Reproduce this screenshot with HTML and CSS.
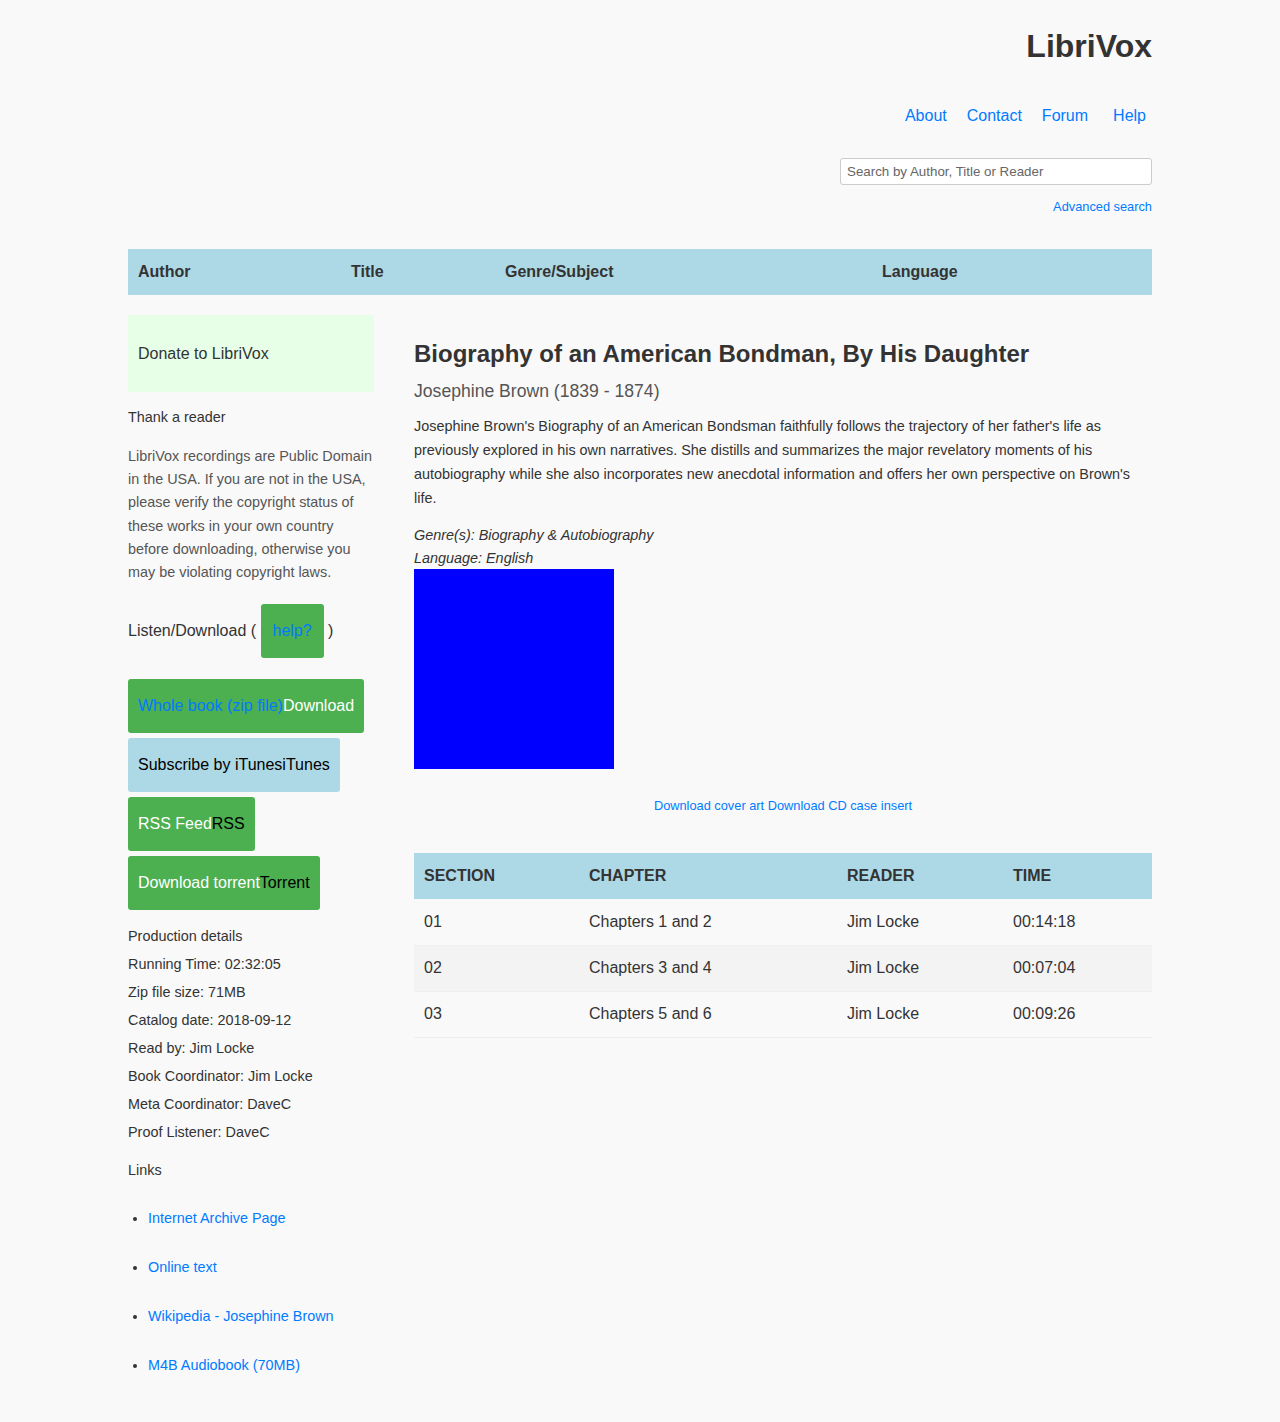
FILE: index.html
```html
<!DOCTYPE html>
<html lang="en">
<head>
<meta charset="utf-8">
<title>LibriVox</title>
<link rel="stylesheet" href="styles.css">
</head>
<body>
<div class="wrap">
  <header class="site-header">
    <h1 class="logo">LibriVox</h1>
    <nav class="top-nav">
      <a href="#" class="nav-about">About</a>
      <a href="#" class="nav-contact">Contact</a>
      <a href="#" class="nav-forum">Forum</a>
      <a href="#" class="nav-help">Help</a>
    </nav>
    <div class="search">
      <input type="text" class="search-input" placeholder="Search by Author, Title or Reader">
      <a href="#" class="adv-search">Advanced search</a>
    </div>
  </header>

  <div class="browse-bar">
    <span class="b-author">Author</span>
    <span class="b-title">Title</span>
    <span class="b-genre">Genre/Subject</span>
    <span class="b-lang">Language</span>
  </div>

  <div class="layout">
    <aside class="sidebar">
      <div class="donate">Donate to LibriVox</div>
      <p class="thank">Thank a reader</p>
      <p class="notice">LibriVox recordings are Public Domain in the USA. If you are not in the USA, please verify the copyright status of these works in your own country before downloading, otherwise you may be violating copyright laws.</p>
      <div class="listen">Listen/Download ( <a href="#" class="btn btn-green help-btn">help?</a> )</div>
      <div class="dl-buttons">
        <a href="#" class="btn btn-green"><span class="link">Whole book (zip file)</span><span class="white">Download</span></a>
        <a href="#" class="btn btn-blue"><span class="black">Subscribe by iTunesiTunes</span></a>
        <a href="#" class="btn btn-green"><span class="white">RSS Feed</span><span class="black">RSS</span></a>
        <a href="#" class="btn btn-green"><span class="white">Download torrent</span><span class="black">Torrent</span></a>
      </div>
      <div class="prod">
        <p>Production details</p>
        <p>Running Time: 02:32:05</p>
        <p>Zip file size: 71MB</p>
        <p>Catalog date: 2018-09-12</p>
        <p>Read by: Jim Locke</p>
        <p>Book Coordinator: Jim Locke</p>
        <p>Meta Coordinator: DaveC</p>
        <p>Proof Listener: DaveC</p>
      </div>
      <p class="links-h">Links</p>
      <ul class="links">
        <li><a href="#">Internet Archive Page</a></li>
        <li><a href="#">Online text</a></li>
        <li><a href="#">Wikipedia - Josephine Brown</a></li>
        <li><a href="#">M4B Audiobook (70MB)</a></li>
      </ul>
    </aside>

    <main class="content">
      <h2 class="book-title">Biography of an American Bondman, By His Daughter</h2>
      <p class="book-author">Josephine Brown (1839 - 1874)</p>
      <p class="desc">Josephine Brown's Biography of an American Bondsman faithfully follows the trajectory of her father's life as previously explored in his own narratives. She distills and summarizes the major revelatory moments of his autobiography while she also incorporates new anecdotal information and offers her own perspective on Brown's life.</p>
      <p class="meta">Genre(s): Biography &amp; Autobiography</p>
      <p class="meta">Language: English</p>
      <div class="cover"></div>
      <div class="cover-links"><a href="#">Download cover art</a> <a href="#">Download CD case insert</a></div>
      <table class="chapters">
        <thead>
          <tr><th class="c1">SECTION</th><th class="c2">CHAPTER</th><th class="c3">READER</th><th class="c4">TIME</th></tr>
        </thead>
        <tbody>
          <tr><td>01</td><td>Chapters 1 and 2</td><td>Jim Locke</td><td>00:14:18</td></tr>
          <tr><td>02</td><td>Chapters 3 and 4</td><td>Jim Locke</td><td>00:07:04</td></tr>
          <tr><td>03</td><td>Chapters 5 and 6</td><td>Jim Locke</td><td>00:09:26</td></tr>
        </tbody>
      </table>
    </main>
  </div>
</div>
</body>
</html>
```

FILE: styles.css
```css
* { box-sizing: border-box; }
html, body { margin: 0; padding: 0; }
body {
  background: #f9f9f9;
  font-family: "Liberation Sans", Arial, sans-serif;
  color: #333;
}
a { color: #007bff; text-decoration: none; }
p { margin: 0; }

.wrap { width: 1024px; margin: 0 auto; }

.site-header { display: flex; flex-direction: column; align-items: flex-end; }
.logo { margin: 28px 0 0 0; font-size: 32px; line-height: 36px; font-weight: bold; color: #333; }
.top-nav { display: flex; margin-top: 42px; padding-right: 6px; font-size: 16px; line-height: 20px; }
.top-nav a { margin-left: 20px; }
.top-nav .nav-help { margin-left: 25px; }
.search { display: flex; flex-direction: column; align-items: flex-end; margin-top: 32px; }
.search-input {
  width: 312px; height: 27px; padding: 2px 6px;
  border: 1px solid #ccc; border-radius: 3px; background: #fff;
  font-family: "Liberation Sans", Arial, sans-serif; font-size: 13.33px; color: #333;
}
.search-input::placeholder { color: #666; }
.adv-search { margin-top: 14px; font-size: 12.8px; line-height: 16px; }

.browse-bar {
  margin-top: 34px; height: 46px; background: #add8e6;
  display: flex; align-items: center; padding-left: 10px;
  font-weight: bold; font-size: 16px; color: #333;
}
.b-author { width: 213px; }
.b-title { width: 154px; }
.b-genre { width: 377px; }

.layout { display: flex; margin-top: 20px; gap: 40px; }
.sidebar { width: 246px; flex: none; font-size: 14.4px; color: #333; }
.donate { background: #e6ffe6; height: 77px; display: flex; align-items: center; padding-left: 10px; font-size: 16px; }
.thank { margin-top: 15px; line-height: 20px; }
.notice { margin-top: 18px; line-height: 23.2px; color: #555; }
.listen { margin-top: 20px; display: flex; align-items: center; font-size: 16px; white-space: pre; }
.btn { display: inline-block; padding: 18px 10px; font-size: 16px; line-height: 18px; border-radius: 3px; }
.btn-green { background: #4caf50; }
.btn-blue { background: #add8e6; }
.help-btn { padding: 18px 12px; color: #007bff; }
.dl-buttons { display: flex; flex-direction: column; align-items: flex-start; gap: 5px; margin-top: 21px; }
.white { color: #fff; }
.black { color: #000; }
.link { color: #007bff; }
.prod { margin-top: 12px; }
.prod p { line-height: 28px; }
.links-h { margin-top: 10px; line-height: 28px; }
.links { margin: 0; padding-left: 20px; margin-top: 24px; }
.links li { line-height: 20px; margin-bottom: 29px; }

.content { flex: 1; font-family: "Liberation Sans", Arial, sans-serif; }
.book-title { margin: 25px 0 0 0; font-size: 24px; line-height: 28px; font-weight: bold; color: #333; }
.book-author { margin-top: 13px; font-size: 17.6px; line-height: 20px; color: #555; }
.desc { margin-top: 13px; font-size: 14.4px; line-height: 24px; color: #333; }
.meta { font-size: 14.4px; line-height: 22.5px; font-style: italic; }
.desc + .meta { margin-top: 14px; }
.cover { width: 200px; height: 200px; background: #00f; }
.cover-links { text-align: center; margin-top: 29px; font-size: 12.8px; line-height: 16px; }
.chapters { width: 100%; border-collapse: collapse; margin-top: 39px; font-size: 16px; }
.chapters th { background: #add8e6; text-align: left; font-weight: bold; height: 46px; padding: 0 10px; }
.chapters td { height: 46px; padding: 0 10px; border-bottom: 1px solid #eee; }
.chapters tbody tr:nth-child(2) td { background: #f3f3f3; }
.c1 { width: 165px; }
.c2 { width: 258px; }
.c3 { width: 166px; }
```
